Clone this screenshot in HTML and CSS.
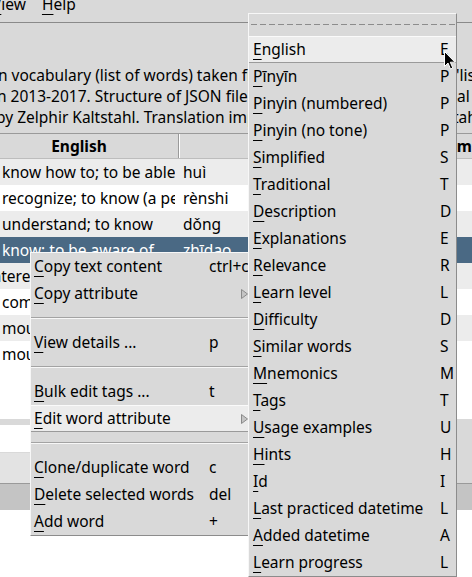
FILE: index.html
```html
<!DOCTYPE html>
<html>
<head>
<meta charset="utf-8">
<link rel="stylesheet" href="styles.css">
</head>
<body>
<div class="window">
  <div class="menubar">
    <span class="mb-item"><u>V</u>iew</span>
    <span class="mb-item"><u>H</u>elp</span>
  </div>
  <div class="desc">
    <div class="desc-line l1"><span class="seg s1">n vocabulary (list of words) taken from the official HSK</span>'list of words'</div>
    <div class="desc-line l2"><span class="seg s2">n 2013-2017. Structure of JSON file and metadata by the origin</span>al</div>
    <div class="desc-line l3"><span class="seg s3">by Zelphir Kaltstahl. Translation improvements by Zelphir Kals</span>tahl</div>
  </div>
  <div class="table">
    <div class="thead">
      <div class="th">English</div>
      <div class="th">Pīnyīn</div>
      <div class="th">Simplified</div>
    </div>
    <div class="tr alt"><div class="td"><span>to know how to; to be able to</span></div><div class="td"><span>huì</span></div><div class="td"><span></span></div></div>
    <div class="tr"><div class="td"><span>to recognize; to know (a person)</span></div><div class="td"><span>rènshi</span></div><div class="td"><span></span></div></div>
    <div class="tr alt"><div class="td"><span>to understand; to know</span></div><div class="td"><span>dǒng</span></div><div class="td"><span></span></div></div>
    <div class="tr sel"><div class="td"><span>to know; to be aware of</span></div><div class="td"><span>zhīdao</span></div><div class="td"><span></span></div></div>
    <div class="tr alt"><div class="td"><span>(interested in)</span></div><div class="td"><span>gǎn xìngqù</span></div><div class="td"><span></span></div></div>
    <div class="tr"><div class="td"><span>to comprehend</span></div><div class="td"><span>lǐjiě</span></div><div class="td"><span></span></div></div>
    <div class="tr alt"><div class="td"><span>to mount</span></div><div class="td"><span>qí</span></div><div class="td"><span></span></div></div>
    <div class="tr"><div class="td"><span>to mourn</span></div><div class="td"><span>āidào</span></div><div class="td"><span></span></div></div>
    <div class="filler"></div>
  </div>
  <div class="entry-row"><div class="entry"></div></div>
  <div class="button-row"><div class="button"></div></div>
  <div class="status"></div>
</div>

<div class="menu ctx">
  <div class="mi"><span><u>C</u>opy text content</span><span>ctrl+c</span><span></span></div>
  <div class="mi"><span><u>C</u>opy attribute</span><span></span><svg class="arrow" width="7" height="10" viewBox="0 0 7 10"><polygon points="0.5,0.5 6.5,5 0.5,9.5" fill="#c4c4c4" stroke="#8a8a8a" stroke-width="1"/></svg></div>
  <div class="sep"></div>
  <div class="mi"><span><u>V</u>iew details ...</span><span>p</span><span></span></div>
  <div class="sep"></div>
  <div class="mi"><span><u>B</u>ulk edit tags ...</span><span>t</span><span></span></div>
  <div class="mi active"><span><u>E</u>dit word attribute</span><span></span><svg class="arrow" width="7" height="10" viewBox="0 0 7 10"><polygon points="0.5,0.5 6.5,5 0.5,9.5" fill="#c4c4c4" stroke="#8a8a8a" stroke-width="1"/></svg></div>
  <div class="sep"></div>
  <div class="mi"><span><u>C</u>lone/duplicate word</span><span>c</span><span></span></div>
  <div class="mi"><span><u>D</u>elete selected words</span><span>del</span><span></span></div>
  <div class="mi"><span><u>A</u>dd word</span><span>+</span><span></span></div>
</div>

<div class="menu sub">
  <div class="tearoff"><div class="dash"></div></div>
  <div class="mi active"><span><u>E</u>nglish</span><span>E</span></div>
  <div class="mi"><span><u>P</u>īnyīn</span><span>P</span></div>
  <div class="mi"><span><u>P</u>inyin (numbered)</span><span>P</span></div>
  <div class="mi"><span><u>P</u>inyin (no tone)</span><span>P</span></div>
  <div class="mi"><span><u>S</u>implified</span><span>S</span></div>
  <div class="mi"><span><u>T</u>raditional</span><span>T</span></div>
  <div class="mi"><span><u>D</u>escription</span><span>D</span></div>
  <div class="mi"><span><u>E</u>xplanations</span><span>E</span></div>
  <div class="mi"><span><u>R</u>elevance</span><span>R</span></div>
  <div class="mi"><span><u>L</u>earn level</span><span>L</span></div>
  <div class="mi"><span><u>D</u>ifficulty</span><span>D</span></div>
  <div class="mi"><span><u>S</u>imilar words</span><span>S</span></div>
  <div class="mi"><span><u>M</u>nemonics</span><span>M</span></div>
  <div class="mi"><span><u>T</u>ags</span><span>T</span></div>
  <div class="mi"><span><u>U</u>sage examples</span><span>U</span></div>
  <div class="mi"><span><u>H</u>ints</span><span>H</span></div>
  <div class="mi"><span><u>I</u>d</span><span>I</span></div>
  <div class="mi"><span><u>L</u>ast practiced datetime</span><span>L</span></div>
  <div class="mi"><span><u>A</u>dded datetime</span><span>A</span></div>
  <div class="mi"><span><u>L</u>earn progress</span><span>L</span></div>
</div>

<svg class="cursor" width="13" height="20" viewBox="0 0 13 20">
  <path d="M0.5,0.5 L0.5,15.5 L4,12 L6.5,18 L8.8,17 L6.3,11.2 L11,11.2 Z" fill="#000" stroke="#fff" stroke-width="1" stroke-linejoin="round"/>
</svg>
</body>
</html>
```

FILE: styles.css
```css
* { box-sizing: border-box; }
html, body { margin: 0; padding: 0; }
body {
  width: 472px;
  height: 577px;
  overflow: hidden;
  position: relative;
  background: #fff;
  font-family: "Noto Sans", "Open Sans", sans-serif;
  font-size: 15.5px;
  color: #000;
}
u { text-decoration-thickness: 1px; text-underline-offset: 4px; }

.window { background: #d9d9d9; }

.menubar {
  display: flex;
  margin-top: -6px;
  height: 29px;
  border-bottom: 1px solid #8a8a8a;
  line-height: 21px;
  white-space: nowrap;
}
.mb-item { padding: 0 8px; }
.mb-item:first-child { margin-left: -16px; }

.desc {
  padding: 42px 0 5px;
  line-height: 21px;
  white-space: nowrap;
}
.desc-line { display: block; overflow: hidden; }
.seg { display: inline-block; overflow: hidden; vertical-align: top; }
.l1 { margin-left: -2px; }
.l2 { margin-left: -3px; }
.l3 { margin-left: -4px; }
.s1 { width: 458px; }
.s2 { width: 460px; }
.s3 { width: 457px; }

.table {
  margin-left: -21px;
  width: 580px;
  background: #fff;
  border-top: 1px solid #9a9a9a;
}
.thead {
  display: grid;
  grid-template-columns: 200px 226px 154px;
  height: 25px;
  background: #d9d9d9;
  border-bottom: 1px solid #bdbdbd;
}
.th {
  border-left: 1px solid #fff;
  border-right: 1px solid #9a9a9a;
  font-weight: bold;
  text-align: center;
  line-height: 24px;
  overflow: hidden;
  white-space: nowrap;
}
.tr {
  display: grid;
  grid-template-columns: 200px 226px 154px;
  height: 26px;
  line-height: 26px;
}
.tr.alt { background: #ececec; }
.tr.sel { background: #4a6984; color: #fff; }
.td { padding: 0 4px; white-space: nowrap; }
.td span { display: block; overflow: hidden; }
.filler { height: 52px; }

.entry-row { height: 34px; padding-top: 6px; }
.entry { height: 27px; width: 430px; background: #fff; }
.button-row { height: 30px; }
.button { height: 30px; width: 430px; background: #e3e3e3; }
.status { height: 27px; background: #c4c4c4; border-top: 1px solid #9a9a9a; }

.menu {
  position: absolute;
  background: #d9d9d9;
  border: 1px solid;
  border-color: #f7f7f7 #8c8c8c #8c8c8c #f7f7f7;
  white-space: nowrap;
}
.ctx { left: 30px; top: 252px; width: 224px; }
.sub { left: 248px; top: 13px; width: 209px; }

.mi {
  display: grid;
  height: 27px;
  line-height: 27px;
  align-items: center;
}
.ctx .mi { grid-template-columns: 175px 32px 1fr; padding-left: 3px; }
.sub .mi { grid-template-columns: 187px 1fr; padding-left: 4px; }
.mi.active {
  background: #ececec;
  border-top: 1px solid #fafafa;
  border-bottom: 1px solid #9a9a9a;
  line-height: 25px;
}
.arrow { display: block; }

.sep { height: 22px; padding-top: 10px; }
.sep::before {
  content: "";
  display: block;
  border-top: 1px solid #a3a3a3;
  border-bottom: 1px solid #f7f7f7;
}
.tearoff { height: 22px; padding: 10px 1px 0 2px; }
.dash {
  height: 1px;
  background: repeating-linear-gradient(to right, #8c8c8c 0 6px, transparent 6px 9px);
}

.cursor { position: absolute; left: 444px; top: 51px; }
```
